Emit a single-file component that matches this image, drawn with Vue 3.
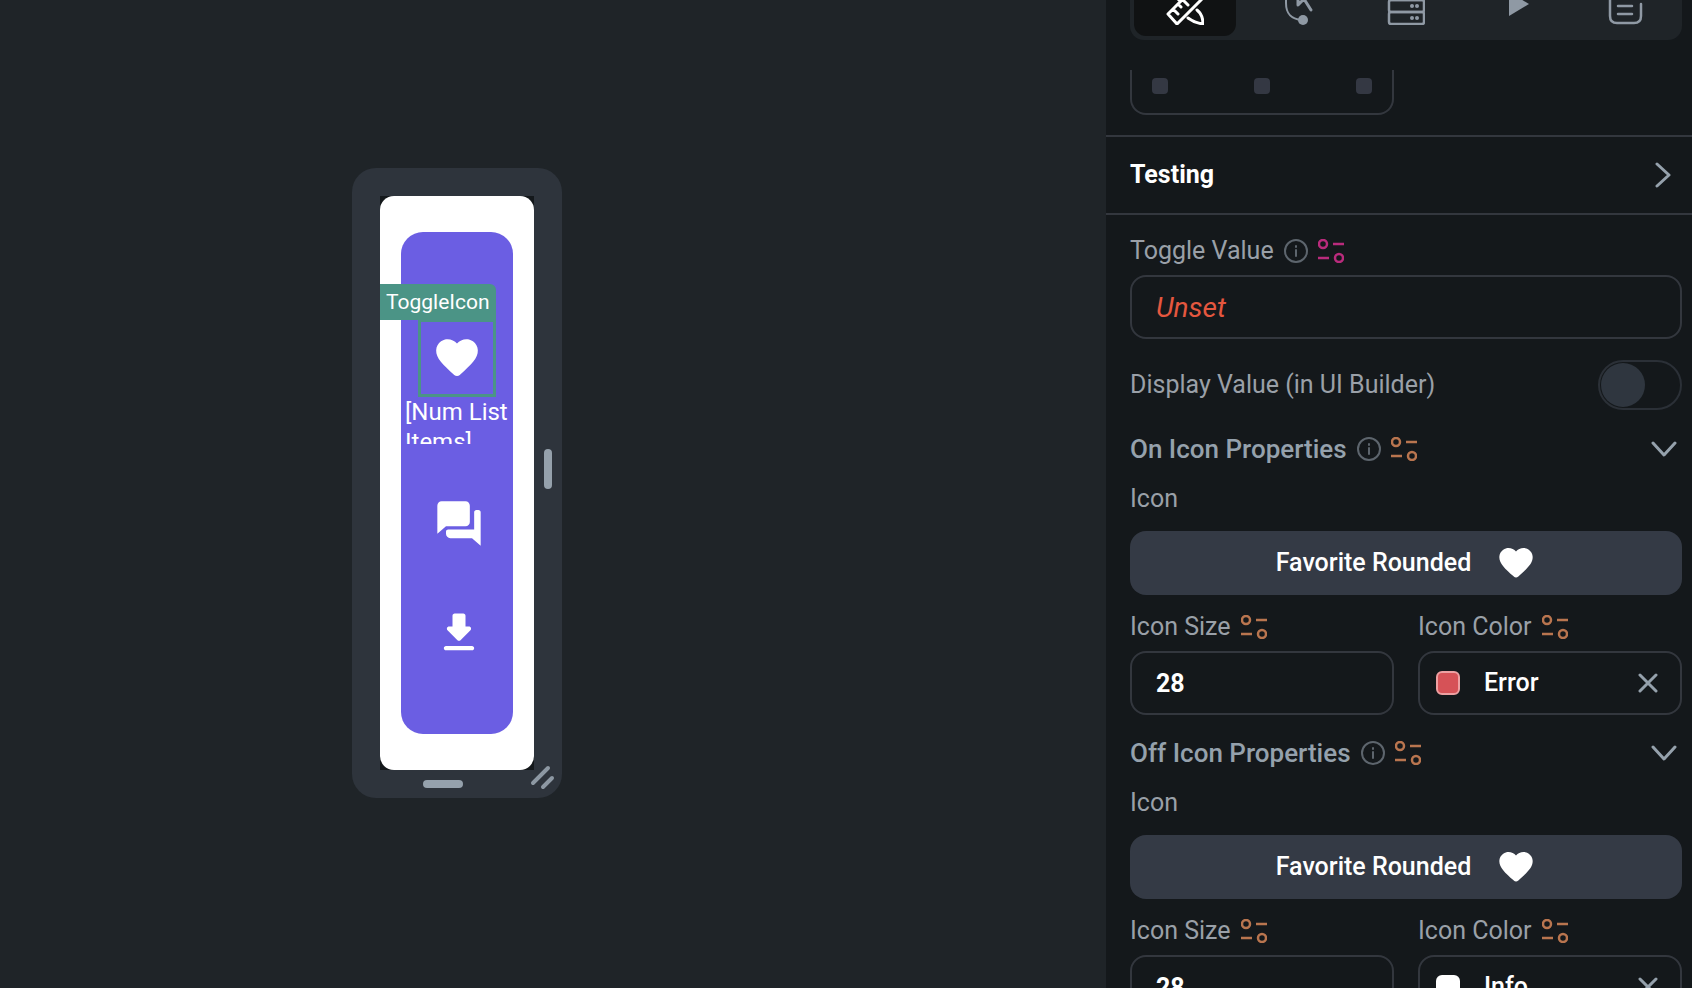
<script setup>
import { ref } from 'vue'

const toggleValue = ref('Unset')
const displayValue = ref(false)

const tabs = ['Design', 'Actions', 'Backend', 'Animations', 'Docs']
const activeTab = ref('Design')

const groups = ref([
  { id: 'on', title: 'On Icon Properties', icon: 'Favorite Rounded', size: '28', color: 'Error' },
  { id: 'off', title: 'Off Icon Properties', icon: 'Favorite Rounded', size: '28', color: 'Info' }
])
</script>

<template>
  <div class="builder">
    <main class="canvas">
      <div class="device">
        <div class="screen-back">
          <div class="screen">
            <div class="rail">
              <div class="selected">
                <span class="tag">ToggleIcon</span>
                <svg class="heart" viewBox="0 0 24 24"><path d="M13.35 20.13c-.76.69-1.93.69-2.69-.01l-.11-.1C5.3 15.27 1.87 12.16 2 8.28c.06-1.7.93-3.33 2.34-4.29 2.64-1.8 5.9-.96 7.66 1.1 1.76-2.06 5.02-2.91 7.66-1.1 1.41.96 2.28 2.59 2.34 4.29.14 3.88-3.3 6.99-8.55 11.76l-.1.09z" /></svg>
              </div>
              <p class="count">[Num List Items]</p>
              <div class="actions">
                <svg viewBox="0 0 24 24"><path d="M21 6h-1c-.55 0-1 .45-1 1v8H7c-.55 0-1 .3-1 1v1c0 1.1.9 2 2 2h10l4 3.5V7c0-.55-.45-1-1-1zm-4 5.5V4c0-1.1-.9-2-2-2H4c-1.1 0-2 .9-2 2v13l4-3.5h9c1.1 0 2-.9 2-2z" /></svg>
                <svg viewBox="0 0 24 24"><path d="M16.59 9H15V4c0-.55-.45-1-1-1h-4c-.55 0-1 .45-1 1v5H7.41c-.89 0-1.34 1.08-.71 1.71l4.59 4.59c.39.39 1.02.39 1.41 0l4.59-4.59c.63-.63.19-1.71-.7-1.71zM5 19c0 .55.45 1 1 1h12c.55 0 1-.45 1-1s-.45-1-1-1H6c-.55 0-1 .45-1 1z" /></svg>
              </div>
            </div>
          </div>
        </div>
        <span class="handle handle-right"></span>
        <span class="handle handle-bottom"></span>
        <svg class="grip" viewBox="0 0 24 24"><path d="M4 19L19 4M14 23L23 14" /></svg>
      </div>
    </main>

    <aside class="panel">
      <header class="panel-head">
        <nav class="tabs">
          <button
            v-for="tab in tabs"
            :key="tab"
            class="tab"
            :class="{ active: tab === activeTab }"
            :aria-label="tab"
            @click="activeTab = tab"
          >
            <svg v-if="tab === 'Design'" viewBox="0 0 38 38">
              <path stroke-width="3" d="M11 37L2 27 27 2l9 10zM7 22l5 5M12 17l3 3M16 12l6 6M21 8l3 3" />
              <path stroke-width="3" d="M22 31c4 3 8 5 15 6 0-5-1-10-6-14M2 2l11 11" />
            </svg>
            <svg v-else-if="tab === 'Actions'" viewBox="0 0 38 38">
              <path stroke-width="2" d="M9 8v8c0 10 4 16 16 17" />
              <path stroke-width="3" d="M34 23l-7-11 7-2L21 0v18l6-6" />
              <circle class="solid" cx="26" cy="33" r="5" />
            </svg>
            <svg v-else-if="tab === 'Backend'" viewBox="0 0 38 38">
              <rect stroke-width="2.5" x="2" y="1" width="35" height="12" rx="2" />
              <rect stroke-width="2.5" x="2" y="13" width="35" height="12" rx="2" />
              <rect stroke-width="2.5" x="2" y="25" width="35" height="12" rx="2" />
              <g class="solid">
                <circle cx="25" cy="19" r="2" /><circle cx="30" cy="19" r="2" />
                <circle cx="25" cy="31" r="2" /><circle cx="30" cy="31" r="2" />
              </g>
            </svg>
            <svg v-else-if="tab === 'Animations'" viewBox="0 0 38 38">
              <path class="solid" d="M12 5v24l20-12z" />
            </svg>
            <svg v-else viewBox="0 0 38 38">
              <path stroke-width="2.5" d="M33 17v12q0 7-7 7H9q-7 0-7-7V9q0-7 7-7h13" />
              <path stroke-width="2.5" d="M10 19h14M10 27h14" />
            </svg>
          </button>
        </nav>
      </header>

      <div class="panel-body">
        <section class="section-first">
          <div class="align-box">
            <i></i><i></i><i></i>
          </div>
        </section>

        <button class="section-row">
          <span>Testing</span>
          <svg class="chevron-right" viewBox="0 0 16 26"><path d="M2 2l12 11L2 24" /></svg>
        </button>

        <section class="props">
          <div class="label-row">
            <label for="toggle-value">Toggle Value</label>
            <svg class="info" viewBox="0 0 24 24"><circle cx="12" cy="12" r="11" /><path d="M12 11v6M12 7v1" /></svg>
            <svg class="bind pink" viewBox="0 0 26 24"><circle cx="5" cy="5" r="4" /><path d="M15 5h11M0 19h11" /><circle cx="21" cy="19" r="4" /></svg>
          </div>
          <input id="toggle-value" v-model="toggleValue" class="field unset" type="text">

          <div class="switch-row">
            <label for="display-value">Display Value (in UI Builder)</label>
            <input id="display-value" v-model="displayValue" class="switch" type="checkbox">
          </div>

          <div v-for="group in groups" :key="group.id" class="group">
            <div class="label-row heading">
              <span>{{ group.title }}</span>
              <svg class="info" viewBox="0 0 24 24"><circle cx="12" cy="12" r="11" /><path d="M12 11v6M12 7v1" /></svg>
              <svg class="bind" viewBox="0 0 26 24"><circle cx="5" cy="5" r="4" /><path d="M15 5h11M0 19h11" /><circle cx="21" cy="19" r="4" /></svg>
              <button class="collapse" :aria-label="'Collapse ' + group.title">
                <svg viewBox="0 0 26 16"><path d="M2 2l11 12L24 2" /></svg>
              </button>
            </div>

            <div class="label-row icon-label">
              <label :for="group.id + '-icon'">Icon</label>
            </div>
            <button :id="group.id + '-icon'" class="picker">
              <span>{{ group.icon }}</span>
              <svg viewBox="0 0 24 24"><path d="M13.35 20.13c-.76.69-1.93.69-2.69-.01l-.11-.1C5.3 15.27 1.87 12.16 2 8.28c.06-1.7.93-3.33 2.34-4.29 2.64-1.8 5.9-.96 7.66 1.1 1.76-2.06 5.02-2.91 7.66-1.1 1.41.96 2.28 2.59 2.34 4.29.14 3.88-3.3 6.99-8.55 11.76l-.1.09z" /></svg>
            </button>

            <div class="pair">
              <div>
                <div class="label-row">
                  <label :for="group.id + '-size'">Icon Size</label>
                  <svg class="bind" viewBox="0 0 26 24"><circle cx="5" cy="5" r="4" /><path d="M15 5h11M0 19h11" /><circle cx="21" cy="19" r="4" /></svg>
                </div>
                <input :id="group.id + '-size'" v-model="group.size" class="field size" type="text">
              </div>
              <div>
                <div class="label-row">
                  <label :for="group.id + '-color'">Icon Color</label>
                  <svg class="bind" viewBox="0 0 26 24"><circle cx="5" cy="5" r="4" /><path d="M15 5h11M0 19h11" /><circle cx="21" cy="19" r="4" /></svg>
                </div>
                <div class="field color">
                  <button :id="group.id + '-color'" class="color-pick">
                    <span class="swatch" :class="'swatch-' + group.color.toLowerCase()"></span>
                    <span>{{ group.color }}</span>
                  </button>
                  <button class="clear" aria-label="Clear color">
                    <svg viewBox="0 0 20 20"><path d="M2 2l16 16M18 2L2 18" /></svg>
                  </button>
                </div>
              </div>
            </div>
          </div>
        </section>
      </div>
    </aside>
  </div>
</template>

<style>
body {
  background: #1f2428;
}
</style>

<style scoped>
.builder {
  display: flex;
  height: 100vh;
  overflow: hidden;
  background: #1f2428;
  font-family: Roboto, "Liberation Sans", sans-serif;
  font-size: 25px;
  line-height: 32px;
  color: #9aa0a8;
}

.builder *,
.builder *::before {
  box-sizing: border-box;
}

button,
input {
  font: inherit;
  color: inherit;
  margin: 0;
}

button {
  background: none;
  border: 0;
  padding: 0;
}

svg {
  display: block;
  flex: none;
  fill: none;
  stroke-linecap: round;
  stroke-linejoin: round;
}

/* Canvas */
.canvas {
  flex: 1;
  min-width: 0;
  padding: 168px 0 0 352px;
}

.device {
  position: relative;
  width: 210px;
  padding: 28px;
  border-radius: 24px;
  background: #2e343c;
}

.screen-back {
  background: #14181b;
}

.screen {
  padding: 36px 21px;
  border-radius: 14px;
  background: #fff;
}

.rail {
  display: flex;
  flex-direction: column;
  align-items: center;
  height: 502px;
  padding-top: 87px;
  border-radius: 22px;
  background: #6b5ee3;
  color: #fff;
}

.selected {
  position: relative;
  display: flex;
  align-items: center;
  justify-content: center;
  width: 78px;
  height: 78px;
  border: 3px solid #4b9486;
}

.heart {
  width: 50px;
  height: 50px;
  fill: #fff;
}

.tag {
  position: absolute;
  right: -3px;
  bottom: 74px;
  width: 116px;
  height: 36px;
  padding-left: 6px;
  border-top-right-radius: 6px;
  background: #4b9486;
  font-size: 21px;
  line-height: 36px;
}

.count {
  width: 104px;
  height: 47px;
  margin: 0;
  overflow: hidden;
  font-size: 24px;
  line-height: 30px;
}

.actions {
  display: flex;
  flex-direction: column;
  gap: 58px;
  margin-top: 53px;
  padding-left: 4px;
}

.actions svg {
  width: 52px;
  height: 52px;
  fill: #fff;
}

.handle {
  position: absolute;
  border-radius: 4px;
  background: #95a1ac;
}

.handle-right {
  top: 281px;
  right: 10px;
  width: 8px;
  height: 40px;
}

.handle-bottom {
  bottom: 10px;
  left: 71px;
  width: 40px;
  height: 8px;
}

.grip {
  position: absolute;
  right: 9px;
  bottom: 10px;
  width: 24px;
  height: 24px;
  overflow: visible;
  stroke: #8d98a3;
  stroke-width: 4;
}

/* Properties panel */
.panel {
  display: flex;
  flex-direction: column;
  flex: none;
  width: 586px;
  background: #14181b;
}

.panel-head {
  display: flex;
  align-items: flex-end;
  flex: none;
  height: 40px;
  margin-bottom: 30px;
  padding: 0 10px 0 24px;
  overflow: hidden;
}

.tabs {
  display: grid;
  grid-template-columns: repeat(5, 1fr);
  gap: 8px;
  flex: 1;
  padding: 4px;
  border-radius: 14px;
  background: #1f2428;
}

.tab {
  display: flex;
  align-items: center;
  justify-content: center;
  height: 60px;
  border-radius: 12px;
  color: #8f99a4;
}

.tab.active {
  background: #101213;
  color: #fff;
}

.tab svg {
  width: 38px;
  height: 38px;
  stroke: currentColor;
}

.tab .solid {
  fill: currentColor;
  stroke: none;
}

.panel-body {
  flex: 1;
  min-height: 0;
  overflow: hidden;
}

.section-first {
  padding: 0 10px 20px 24px;
  border-bottom: 2px solid #33373e;
}

.align-box {
  display: flex;
  justify-content: space-between;
  width: 264px;
  height: 45px;
  padding: 8px 20px 0;
  border: 2px solid #33373e;
  border-top: 0;
  border-radius: 0 0 16px 16px;
}

.align-box i {
  width: 16px;
  height: 16px;
  border-radius: 4px;
  background: #343843;
}

.section-row {
  display: flex;
  align-items: center;
  justify-content: space-between;
  width: 100%;
  height: 78px;
  padding: 0 21px 0 24px;
  border-bottom: 2px solid #33373e;
  color: #fff;
  font-weight: 700;
}

.chevron-right {
  width: 16px;
  height: 26px;
  stroke: #95a1ac;
  stroke-width: 3;
}

.props {
  padding: 20px 10px 0 24px;
}

.label-row {
  display: flex;
  align-items: center;
  gap: 10px;
  height: 32px;
  margin-bottom: 8px;
}

.heading {
  margin-bottom: 18px;
  font-size: 26px;
  font-weight: 500;
  color: #95a1ac;
}

.icon-label {
  margin-bottom: 16px;
}

.info {
  width: 24px;
  height: 24px;
  stroke: #5d656d;
  stroke-width: 2;
}

.bind {
  width: 26px;
  height: 24px;
  stroke: #b9754f;
  stroke-width: 2.5;
  stroke-linecap: butt;
}

.pink {
  stroke: #b92b7c;
}

.collapse {
  margin: 0 5px 0 auto;
}

.collapse svg {
  width: 26px;
  height: 16px;
  stroke: #95a1ac;
  stroke-width: 3;
}

.field {
  display: block;
  width: 100%;
  height: 64px;
  padding: 0 24px;
  border: 2px solid #33373e;
  border-radius: 16px;
  background: transparent;
  color: #fff;
}

.unset {
  color: #e5573f;
  font-size: 28px;
  font-style: italic;
}

.size {
  font-weight: 700;
}

.switch-row {
  display: flex;
  align-items: center;
  justify-content: space-between;
  height: 50px;
  margin: 21px 0 23px;
}

.switch {
  appearance: none;
  width: 84px;
  height: 50px;
  padding: 1px;
  border: 2px solid #2b3037;
  border-radius: 25px;
}

.switch::before {
  content: "";
  display: block;
  width: 44px;
  height: 44px;
  border-radius: 50%;
  background: #2f363f;
}

.switch:checked::before {
  margin-left: auto;
}

.group {
  margin-bottom: 22px;
}

.picker {
  display: flex;
  align-items: center;
  justify-content: center;
  gap: 25px;
  width: 100%;
  height: 64px;
  margin-bottom: 16px;
  border-radius: 16px;
  background: #343a45;
  color: #fff;
  font-weight: 500;
}

.picker svg {
  width: 40px;
  height: 40px;
  fill: #fff;
}

.pair {
  display: grid;
  grid-template-columns: 1fr 1fr;
  gap: 24px;
}

.color {
  display: flex;
  align-items: center;
  justify-content: space-between;
  padding: 0 22px 0 16px;
  font-weight: 500;
}

.color-pick {
  display: flex;
  align-items: center;
  gap: 24px;
}

.swatch {
  width: 24px;
  height: 24px;
  border: 2px solid #eda0a2;
  border-radius: 6px;
  background: #d65257;
}

.swatch-info {
  border-color: #fff;
  background: #fff;
}

.clear svg {
  width: 20px;
  height: 20px;
  stroke: #95a1ac;
  stroke-width: 3;
}
</style>
